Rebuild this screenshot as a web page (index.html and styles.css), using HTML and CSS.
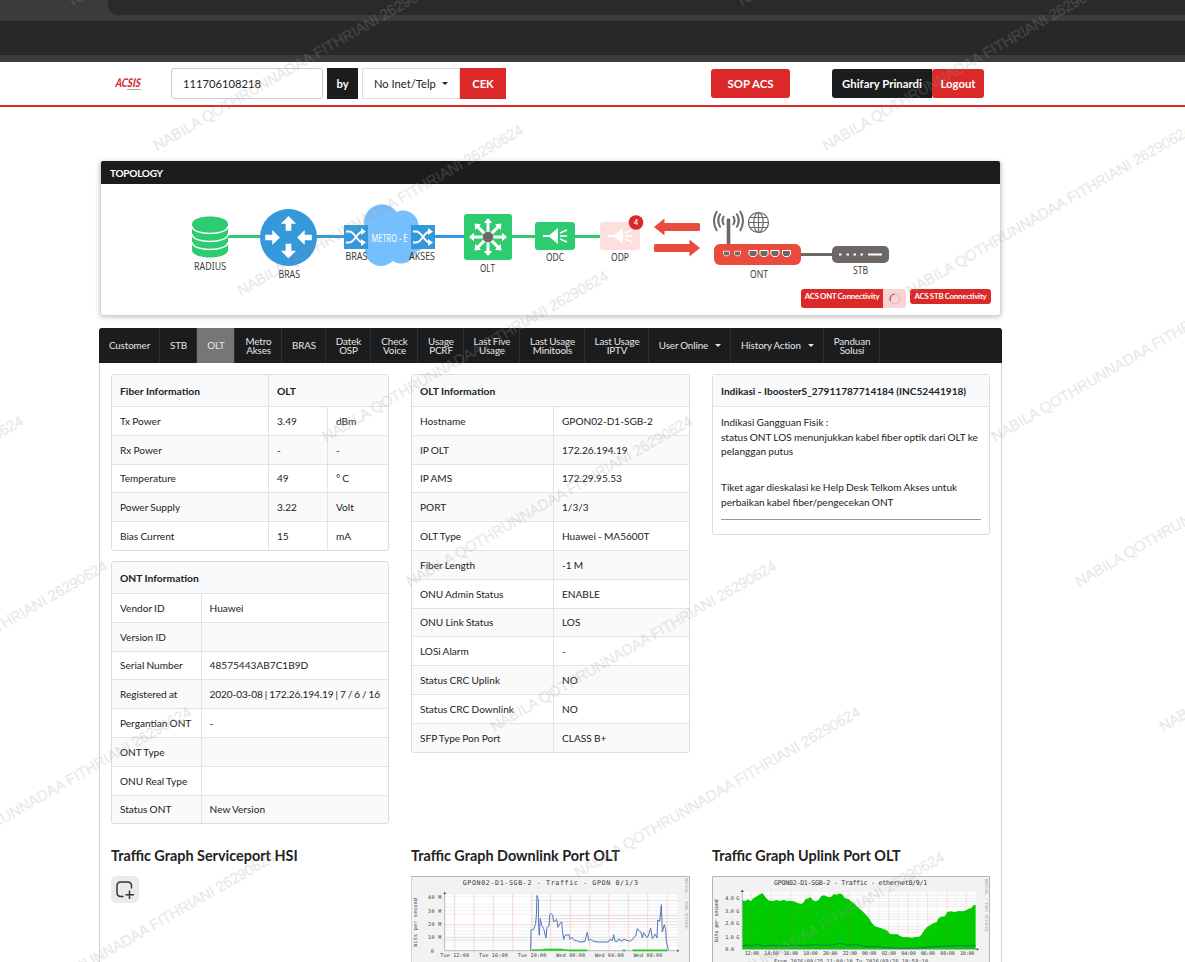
FILE: index.html
```html
<!DOCTYPE html>
<html lang="id">
<head>
    <meta charset="UTF-8">
    <meta name="viewport" content="width=device-width, initial-scale=1.0">
    <title>ACSIS</title>
    <link rel="stylesheet" href="styles.css">
</head>
<body>
    <div class="browser-bar"><div class="address"></div></div>
    <div class="bookmark-bar"></div>

    <header class="topbar">
        <svg class="logo" width="30" height="16" viewBox="0 0 30 16">
            <text x="1.500" y="12" textLength="25" lengthAdjust="spacingAndGlyphs" transform="skewX(-6)">ACSIS</text>
            <path d="M12 14.500h14" stroke="#b9a5a5" stroke-width="1"/>
        </svg>
        <input class="search" type="text" value="111706108218">
        <div class="by">by</div>
        <div class="select">No Inet/Telp <i class="caret"></i></div>
        <button class="cek">CEK</button>
        <button class="btn sop">SOP ACS</button>
        <button class="btn user">Ghifary Prinardi</button>
        <button class="btn logout">Logout</button>
    </header>

    <section class="topology">
        <h2>TOPOLOGY</h2>
        <svg class="diagram" width="898" height="104" viewBox="101 185 898 104">
            <defs>
                <path id="arrow" d="M-3-6.5V-14h-5L0-22l8 8H3v7.5z" transform="scale(.95)"/>
                <g id="shuffle" fill="none" stroke="#fff" stroke-width="2">
                    <path d="M-10-5.500h3.500Q-4-5.500 0 0T6.500 5.500M-10 5.500h3.500Q-4 5.500 0 0T6.500-5.500"/>
                    <path fill="#fff" stroke="none" d="M5-9l5 3.500-5 3.500zM5 2l5 3.500-5 3.500z"/>
                </g>
                <path id="spoke" d="M-1.500-4v-10h-2.700L0-19l4.200 5H1.500v10z"/>
                <g id="horn">
                    <path d="M-12-1h6.500L3-8V8L-5.500 1H-12z"/>
                    <path d="M5-3l7-3M5 0h7M5 3l7 3" stroke="#fff" stroke-width="1.500"/>
                </g>
                <path id="port" d="M-4-3h8v4l-2 2h-4l-2-2z"/>
            </defs>

            <!-- links -->
            <path d="M227 236.500h35M511 236.500h90" stroke="#2ecc71" stroke-width="3"/>
            <path d="M316 236.500h29M434 236.500h31" stroke="#3498db" stroke-width="3"/>
            <path d="M800 254.500h33" stroke="#6d6766" stroke-width="3"/>

            <!-- radius -->
            <path d="M192 224v26c0 10 36 10 36 0v-26c0-10-36-10-36 0z" fill="#2ecc71"/>
            <path d="M192 226c0 10 36 10 36 0M192 234c0 10 36 10 36 0M192 242c0 10 36 10 36 0" fill="none" stroke="#fff" stroke-width="1.500"/>
            <text x="194" y="270" textLength="32" lengthAdjust="spacingAndGlyphs">RADIUS</text>

            <!-- bras -->
            <circle cx="288.500" cy="237.500" r="28.500" fill="#3498db"/>
            <g fill="#fff">
                <use href="#arrow" x="288.500" y="237"/>
                <use href="#arrow" transform="translate(288.500 237.500) rotate(180)"/>
                <use href="#arrow" transform="translate(266 237.500) rotate(90) translate(0 7)"/>
                <use href="#arrow" transform="translate(311 237.500) rotate(-90) translate(0 7)"/>
            </g>
            <text x="278.500" y="278" textLength="21.500" lengthAdjust="spacingAndGlyphs">BRAS</text>

            <!-- metro -->
            <g fill="#74bffc">
                <circle cx="382" cy="222.500" r="18"/>
                <circle cx="403" cy="226" r="15.500"/>
                <circle cx="381" cy="250" r="16"/>
                <circle cx="401" cy="249" r="14.500"/>
                <circle cx="373" cy="236" r="13"/>
                <circle cx="413" cy="239" r="13"/>
                <path d="M372 222h36v32h-36z"/>
            </g>
            <path d="M344 225h24v24h-24zM411 225h24v24h-24z" fill="#3498db"/>
            <use href="#shuffle" x="356" y="237"/>
            <use href="#shuffle" x="423" y="237"/>
            <text class="metro" x="371.500" y="241.500" textLength="36" lengthAdjust="spacingAndGlyphs">METRO - E</text>
            <text x="345.500" y="260" textLength="22" lengthAdjust="spacingAndGlyphs">BRAS</text>
            <text x="409" y="260" textLength="26" lengthAdjust="spacingAndGlyphs">AKSES</text>

            <!-- olt -->
            <rect x="464" y="214" width="48" height="46" rx="3" fill="#2ecc71"/>
            <g transform="translate(488 237)" fill="#fff">
                <use href="#spoke"/>
                <use href="#spoke" transform="rotate(45)"/>
                <use href="#spoke" transform="rotate(90)"/>
                <use href="#spoke" transform="rotate(135)"/>
                <use href="#spoke" transform="rotate(180)"/>
                <use href="#spoke" transform="rotate(225)"/>
                <use href="#spoke" transform="rotate(270)"/>
                <use href="#spoke" transform="rotate(315)"/>
                <circle r="5.300" fill="#6d6766"/>
            </g>
            <text x="480" y="272" textLength="15" lengthAdjust="spacingAndGlyphs">OLT</text>

            <!-- odc / odp -->
            <rect x="535" y="222" width="40" height="28" rx="3" fill="#2ecc71"/>
            <use href="#horn" x="555" y="236" fill="#fff"/>
            <text x="546" y="261" textLength="18" lengthAdjust="spacingAndGlyphs">ODC</text>
            <rect x="600" y="222" width="40" height="28" rx="3" fill="#fde0de"/>
            <use href="#horn" x="620" y="236" fill="#fff"/>
            <text x="611" y="261" textLength="18" lengthAdjust="spacingAndGlyphs">ODP</text>
            <circle cx="636" cy="222.500" r="7.300" fill="#db2828"/>
            <text class="badge" x="636" y="225">4</text>

            <path d="M654 227l10.500-8.500v4.500h34q1.500 0 1.500 1.500v5q0 1.500-1.500 1.500h-34v4.500z" fill="#e94b3c"/>
            <path d="M700 248l-10.500-8.500v4.500h-34q-1.500 0-1.500 1.500v5q0 1.500 1.500 1.500h34v4.500z" fill="#e94b3c"/>

            <!-- ont -->
            <g fill="none" stroke="#6d6766" stroke-width="2">
                <path d="M728.500 220v25" stroke-width="3.600" stroke-linecap="round"/>
                <path d="M724 216q-3 4.500 0 9M720.500 213.500q-4.500 7 0 14M717 211q-6 10 0 20M733 216q3 4.500 0 9M736.500 213.500q4.500 7 0 14M740 211q6 10 0 20"/>
                <g stroke-width="1.200">
                    <circle cx="758.500" cy="222.500" r="10"/>
                    <ellipse cx="758.500" cy="222.500" rx="4.700" ry="10"/>
                    <path d="M758.500 212.500v20M748.500 222.500h20M750 217.500h17M750 227.500h17"/>
                </g>
            </g>
            <rect x="714" y="244" width="87" height="21" rx="6" fill="#e94b3c"/>
            <g fill="#6d6766" stroke="#fff" stroke-width="1">
                <use href="#port" transform="translate(726.500 253.500) scale(.75)"/>
                <use href="#port" transform="translate(737.500 253.500) scale(.75)"/>
                <use href="#port" x="753" y="253.500"/>
                <use href="#port" x="764" y="253.500"/>
                <use href="#port" x="775" y="253.500"/>
                <use href="#port" x="786.500" y="253.500"/>
            </g>
            <text x="750" y="278" textLength="18" lengthAdjust="spacingAndGlyphs">ONT</text>

            <!-- stb -->
            <rect x="832" y="246" width="57" height="17" rx="5" fill="#6d6766"/>
            <path d="M839 254.500h2.500M846.500 254.500h2.500M853.500 254.500h2.500M860.500 254.500h2.500M868 254.500h14" stroke="#fff" stroke-width="2.200"/>
            <text x="853" y="274" textLength="15" lengthAdjust="spacingAndGlyphs">STB</text>
        </svg>
        <div class="acs">
            <span class="acs-ont">ACS ONT Connectivity</span>
            <span class="acs-load"><svg width="12" height="12" viewBox="0 0 12 12"><circle cx="6" cy="6" r="5" fill="none" stroke="#e3bcbc" stroke-width="1.200"/><path d="M1.500 8A5 5 0 0 1 6 1" fill="none" stroke="#8a6a6a" stroke-width="1.200"/></svg></span>
            <span class="acs-stb">ACS STB Connectivity</span>
        </div>
    </section>

    <main class="panel">
        <nav class="tabs">
            <a>Customer</a>
            <a>STB</a>
            <a class="active">OLT</a>
            <a>Metro<br>Akses</a>
            <a>BRAS</a>
            <a>Datek<br>OSP</a>
            <a>Check<br>Voice</a>
            <a>Usage<br>PCRF</a>
            <a>Last Five<br>Usage</a>
            <a>Last Usage<br>Minitools</a>
            <a>Last Usage<br>IPTV</a>
            <a>User Online <i class="caret"></i></a>
            <a>History Action <i class="caret"></i></a>
            <a>Panduan<br>Solusi</a>
        </nav>

        <div class="columns">
            <div class="col">
                <table class="fiber">
                    <tr><th>Fiber Information</th><th colspan="2">OLT</th></tr>
                    <tr><td>Tx Power</td><td>3.49</td><td>dBm</td></tr>
                    <tr><td>Rx Power</td><td>-</td><td>-</td></tr>
                    <tr><td>Temperature</td><td>49</td><td>° C</td></tr>
                    <tr><td>Power Supply</td><td>3.22</td><td>Volt</td></tr>
                    <tr><td>Bias Current</td><td>15</td><td>mA</td></tr>
                </table>
                <table class="ont">
                    <tr><th colspan="2">ONT Information</th></tr>
                    <tr><td>Vendor ID</td><td>Huawei</td></tr>
                    <tr><td>Version ID</td><td></td></tr>
                    <tr><td>Serial Number</td><td>48575443AB7C1B9D</td></tr>
                    <tr><td>Registered at</td><td class="registered">2020-03-08 | 172.26.194.19 | 7 / 6 / 16</td></tr>
                    <tr><td>Pergantian ONT</td><td>-</td></tr>
                    <tr><td>ONT Type</td><td></td></tr>
                    <tr><td>ONU Real Type</td><td></td></tr>
                    <tr><td>Status ONT</td><td>New Version</td></tr>
                </table>
            </div>
            <div class="col">
                <table class="olt">
                    <tr><th colspan="2">OLT Information</th></tr>
                    <tr><td>Hostname</td><td>GPON02-D1-SGB-2</td></tr>
                    <tr><td>IP OLT</td><td>172.26.194.19</td></tr>
                    <tr><td>IP AMS</td><td>172.29.95.53</td></tr>
                    <tr><td>PORT</td><td>1/3/3</td></tr>
                    <tr><td>OLT Type</td><td>Huawei - MA5600T</td></tr>
                    <tr><td>Fiber Length</td><td>-1 M</td></tr>
                    <tr><td>ONU Admin Status</td><td>ENABLE</td></tr>
                    <tr><td>ONU Link Status</td><td>LOS</td></tr>
                    <tr><td>LOSi Alarm</td><td>-</td></tr>
                    <tr><td>Status CRC Uplink</td><td>NO</td></tr>
                    <tr><td>Status CRC Downlink</td><td>NO</td></tr>
                    <tr><td>SFP Type Pon Port</td><td>CLASS B+</td></tr>
                </table>
            </div>
            <div class="col">
                <div class="indikasi">
                    <h3>Indikasi - IboosterS_27911787714184 (INC52441918)</h3>
                    <div class="indikasi-body">
                        <p>Indikasi Gangguan Fisik :<br>status ONT LOS menunjukkan kabel fiber optik dari OLT ke pelanggan putus</p>
                        <p>Tiket agar dieskalasi ke Help Desk Telkom Akses untuk perbaikan kabel fiber/pengecekan ONT</p>
                        <hr>
                    </div>
                </div>
            </div>
        </div>

        <div class="columns graphs">
            <div class="col">
                <h4>Traffic Graph Serviceport HSI</h4>
                <button class="add">
                    <svg width="20" height="20" viewBox="0 0 20 20" fill="none" stroke="#333" stroke-width="1.500">
                        <path d="M8.500 16.500H6q-4 0-4-4V6q0-4 4-4h6.500q4 0 4 4v2.500"/>
                        <path d="M14.500 10.500v8.500M10.500 14.700h8.500"/>
                    </svg>
                </button>
            </div>
            <div class="col">
                <h4>Traffic Graph Downlink Port OLT</h4>
                <svg class="graph" width="279" height="96" viewBox="33 108 837 288">
                    <rect x="33" y="108" width="837" height="288" fill="#f2f2f2"/>
                    <rect x="134" y="162" width="698" height="170" fill="#fff"/>
                    <path d="M134 162h698M134 170h698M134 192h698M134 202h698M134 212h698M134 222h698M134 262h698M134 272h698M134 282h698M134 308h698M134 318h698" stroke="#ececec" stroke-width="2"/>
                    <path d="M392 181h440M392 227h440M392 236h440M392 245h440M134 292h698M134 300h698" stroke="#cfcfcf" stroke-width="2"/>
                    <path d="M134 254h698M164 162v170M222 162v170M280 162v170M338 162v170M395 162v170M452 162v170M511 162v170M569 162v170M627 162v170M685 162v170M743 162v170M801 162v170" stroke="#f6c6c6" stroke-width="2"/>
                    <path d="M134 156v176h700" fill="none" stroke="#999" stroke-width="2"/>
                    <polyline points="392,332 393,270 401,268 407,250 409,228 411,166 415,180 416,262 418,286 421,236 425,256 431,266 438,294 441,262 447,258 449,224 453,220 458,226 461,246 467,240 470,238 474,262 480,250 485,246 487,268 491,298 495,286 507,284 510,298 516,292 524,302 530,302 540,306 555,304 562,276 566,302 572,298 580,304 594,306 624,306 630,298 637,302 641,284 645,304 653,304 657,296 663,304 672,298 690,304 698,298 704,290 707,288 712,266 718,274 723,276 727,294 731,278 740,292 744,290 752,264 757,296 761,290 766,282 771,294 773,240 779,244 784,194 787,276 793,254 797,268 799,304 805,330" fill="none" stroke="#5574bd" stroke-width="3"/>
                    <path d="M396 330h110M506 331h56M668 331h8M698 331h104" stroke="#2c2" stroke-width="5"/>
                    <path d="M430 328h60" stroke="#2c2" stroke-width="4"/>
                    <path d="M130 162l4-7 4 7zM832 328l6 4-6 4z" fill="#a22"/>
                    <g class="graph-text">
                        <text class="graph-title" x="188" y="136" textLength="526">GPON02-D1-SGB-2 - Traffic - GPON 0/1/3</text>
                        <text x="84" y="177" textLength="40">40 M</text>
                        <text x="84" y="218" textLength="40">30 M</text>
                        <text x="84" y="258" textLength="40">20 M</text>
                        <text x="84" y="298" textLength="40">10 M</text>
                        <text x="92" y="338">0</text>
                        <text x="121" y="352" textLength="86">Tue 12:00</text>
                        <text x="237" y="352" textLength="86">Tue 16:00</text>
                        <text x="353" y="352" textLength="86">Tue 20:00</text>
                        <text x="469" y="352" textLength="86">Wed 00:00</text>
                        <text x="585" y="352" textLength="86">Wed 04:00</text>
                        <text x="701" y="352" textLength="86">Wed 08:00</text>
                        <text transform="translate(52 320) rotate(-90)" textLength="146">bits per second</text>
                        <text class="rrd" transform="translate(855 114) rotate(90)" textLength="152">RRDTOOL / TOBI OETIKER</text>
                    </g>
                    <path d="M33 396V109.500h835.500V396" fill="none" stroke="#b5b5b5" stroke-width="3"/>
                </svg>
            </div>
            <div class="col">
                <h4>Traffic Graph Uplink Port OLT</h4>
                <svg class="graph" width="279" height="96" viewBox="36 108 837 288">
                    <rect x="36" y="108" width="834" height="288" fill="#f2f2f2"/>
                    <rect x="127" y="157" width="702" height="171" fill="#fff"/>
                    <path d="M127 165h702M127 184h702M127 192h702M127 200h702M127 222h702M127 230h702M127 238h702M127 260h702M127 268h702M127 276h702" stroke="#e2e2e2" stroke-width="2"/>
                    <polygon points="127,328 127,180 135,183 145,178 152,184 160,175 172,168 180,163 188,160 194,168 200,176 208,182 220,183 230,180 240,183 252,179 260,184 270,182 280,184 292,188 302,192 310,188 316,178 328,174 332,171 338,180 346,184 356,180 364,168 372,166 382,170 392,172 402,162 410,164 420,160 428,164 434,174 446,178 456,186 464,192 474,202 486,212 498,224 508,236 516,250 524,258 534,262 542,264 552,268 562,272 570,282 580,283 592,282 600,288 610,292 622,291 636,293 646,291 658,290 664,284 672,272 680,262 690,256 700,250 710,246 716,234 724,230 734,229 742,216 752,214 764,216 776,213 788,214 798,211 806,206 814,204 820,196 827,194 827,328" fill="#0c0"/>
                    <path d="M154 157v171M213 157v171M272 157v171M330 157v171M390 157v171M448 157v171M507 157v171M566 157v171M624 157v171M683 157v171M741 157v171M799 157v171" stroke="#e33" stroke-width="2" opacity=".2"/>
                    <path d="M184 157v171M243 157v171M301 157v171M360 157v171M419 157v171M477 157v171M536 157v171M595 157v171M653 157v171M712 157v171M770 157v171M127 176h702M127 214h702M127 252h702M127 290h702" stroke="#444" stroke-width="2" opacity=".08"/>
                    <polyline points="127,318 139,315 153,317 173,313 187,317 227,316 257,318 287,315 307,317 347,314 367,316 397,315 420,310 440,315 470,314 500,320 530,320 560,323 600,325 650,325 680,322 720,319 780,316 800,318 827,317" fill="none" stroke="#0a7a5a" stroke-width="3"/>
                    <path d="M127 152v176h704" fill="none" stroke="#999" stroke-width="2"/>
                    <path d="M122 156l5-7 5 7zM830 324l7 4-7 4z" fill="#a22"/>
                    <g class="graph-text">
                        <text class="graph-title" x="222" y="134" textLength="460">GPON02-D1-SGB-2 - Traffic - ethernet0/9/1</text>
                        <text x="76" y="180" textLength="42">4.0 G</text>
                        <text x="76" y="218" textLength="42">3.0 G</text>
                        <text x="76" y="256" textLength="42">2.0 G</text>
                        <text x="76" y="296" textLength="42">1.0 G</text>
                        <text x="76" y="333" textLength="26">0.0</text>
                        <text x="134" y="344" textLength="43">12:00</text>
                        <text x="193" y="344" textLength="43">14:00</text>
                        <text x="251" y="344" textLength="43">16:00</text>
                        <text x="310" y="344" textLength="43">18:00</text>
                        <text x="369" y="344" textLength="43">20:00</text>
                        <text x="428" y="344" textLength="43">22:00</text>
                        <text x="486" y="344" textLength="43">00:00</text>
                        <text x="545" y="344" textLength="43">02:00</text>
                        <text x="604" y="344" textLength="43">04:00</text>
                        <text x="662" y="344" textLength="43">06:00</text>
                        <text x="721" y="344" textLength="43">08:00</text>
                        <text x="780" y="344" textLength="43">10:00</text>
                        <text x="222" y="369" textLength="462">From 2026/09/25 11:00:10 To 2026/09/26 10:58:10</text>
                        <text transform="translate(54 306) rotate(-90)" textLength="128">bits per second</text>
                        <text class="rrd" transform="translate(855 116) rotate(90)" textLength="158">RRDTOOL / TOBI OETIKER</text>
                    </g>
                    <path d="M37.500 396V109.500h831V396" fill="none" stroke="#b5b5b5" stroke-width="3"/>
                </svg>
            </div>
        </div>
    </main>

    <svg class="watermark" width="1185" height="962" viewBox="0 0 1185 962">
        <defs>
            <text id="wm" transform="rotate(-29.900)" textLength="327">NABILA QOTHRUNNADAA FITHRIANI 26290624</text>
        </defs>
        <use href="#wm" x="73" y="6"/>
        <use href="#wm" x="157" y="151"/>
        <use href="#wm" x="241" y="296"/>
        <use href="#wm" x="326" y="442"/>
        <use href="#wm" x="410" y="587"/>
        <use href="#wm" x="494" y="732"/>
        <use href="#wm" x="578" y="878"/>
        <use href="#wm" x="662" y="1023"/>
        <use href="#wm" x="742" y="6"/>
        <use href="#wm" x="826" y="151"/>
        <use href="#wm" x="910" y="296"/>
        <use href="#wm" x="995" y="442"/>
        <use href="#wm" x="1079" y="587"/>
        <use href="#wm" x="1163" y="732"/>
        <use href="#wm" x="-259" y="587"/>
        <use href="#wm" x="-175" y="732"/>
        <use href="#wm" x="-91" y="878"/>
        <use href="#wm" x="-7" y="1023"/>
    </svg>
</body>
</html>
```

FILE: styles.css
```css
* { box-sizing: border-box; }
body { margin: 0; height: 962px; overflow: hidden; position: relative; background: #fff; font-family: Lato, "Liberation Sans", sans-serif; font-size: 10.1px; color: #222; }
button { font-family: inherit; border: none; padding: 0; }

.browser-bar { height: 21px; padding-left: 108px; background: #3b3b3b; }
.address { height: 15px; background: #2a2a2a; border-bottom-left-radius: 10px; }
.bookmark-bar { height: 41px; background: #282828; border-bottom: 7px solid #3b3b3b; }

.topbar { display: flex; align-items: center; height: 45px; padding: 0 0 1px 115px; border-bottom: 2px solid #db2828; }
.logo { margin-right: 26px; }
.logo text { font: italic 900 12px Lato, sans-serif; fill: #cf3338; }
.search { width: 152px; height: 31px; padding: 0 11px; border: 1px solid #ccc; border-radius: 3px; font-family: inherit; font-size: 11.2px; color: #222; }
.by { width: 31px; height: 31px; margin: 0 4px; background: #1b1c1d; color: #fff; font-weight: 700; font-size: 11.2px; line-height: 31px; text-align: center; }
.select { display: flex; align-items: center; justify-content: space-between; width: 98px; height: 31px; padding: 0 11px; border: 1px solid #ddd; font-size: 11.2px; }
.caret { display: inline-block; border: 3px solid transparent; border-top-color: currentColor; border-bottom: 0; }
.cek { width: 46px; height: 31px; background: #db2828; color: #fff; font-size: 11.2px; font-weight: 700; }
.btn { height: 29px; border-radius: 3px; background: #db2828; color: #fff; font-size: 11.4px; font-weight: 700; white-space: nowrap; }
.sop { width: 79px; margin: 0 42px 0 205px; }
.user { width: 100px; background: #1b1c1d; border-radius: 3px 0 0 3px; }
.logout { width: 52px; }

.topology { width: 901px; height: 155px; margin: 54px 0 0 100px; border: 1px solid #d4d4d5; border-top: 0; border-radius: 3px; box-shadow: 0 1px 5px rgba(0,0,0,.25); }
.topology h2 { height: 23px; margin: 0 0 1px; padding-left: 9px; background: #1b1c1d; border-radius: 2px 2px 0 0; color: #fff; font-size: 10.1px; line-height: 25px; letter-spacing: -.3px; }
.diagram { display: block; }
.diagram text { font: 9.9px "Noto Sans", sans-serif; fill: #3c3c3c; }
.diagram .metro { font-size: 9.9px; fill: #fff; }
.diagram .badge { font: 700 7px Lato, sans-serif; fill: #fff; text-anchor: middle; }
.acs { display: flex; align-items: flex-start; justify-content: flex-end; padding-right: 9px; color: #fff; font-size: 7.8px; font-weight: 700; line-height: 15px; text-align: center; letter-spacing: -.2px; word-spacing: -.4px; white-space: nowrap; }
.acs-ont { width: 82px; height: 19px; background: #db2828; border-radius: 3px 0 0 3px; }
.acs-load { display: flex; align-items: center; justify-content: center; width: 23px; height: 19px; margin-right: 4px; background: #f8d4d4; border-radius: 0 3px 3px 0; }
.acs-stb { width: 81px; height: 15px; background: #db2828; border-radius: 3px; }

.panel { width: 903px; height: 640px; margin: 12px 0 0 99px; border: 1px solid #d4d4d5; border-top: 0; border-radius: 3px 3px 0 0; }
.tabs { display: grid; grid-template-columns: 61px 37px 38px 47px 44px 45px 47px 46px 56px 65px 64px 82px 93px 56px; height: 35px; margin: 0 -1px; background: #1b1c1d; border-radius: 3px 3px 0 0; }
.tabs a { display: flex; align-items: center; justify-content: center; border-right: 1px solid #2e2f30; padding-left: 1px; color: #e6e6e6; font-size: 9.8px; line-height: 9px; letter-spacing: -.1px; word-spacing: -.4px; text-align: center; white-space: nowrap; }
.tabs .active { background: #767676; }
.tabs .caret { margin-left: 7px; }

.columns { display: grid; grid-template-columns: 278px 279px 278px; column-gap: 22px; padding: 11px 11px 0; }
table { width: 100%; margin-bottom: 10px; border: 1px solid #dcdddd; border-radius: 3px; border-spacing: 0; overflow: hidden; }
th, td { height: 28.8px; padding: 0 8px; text-align: left; white-space: nowrap; }
th { height: 31px; background: #f9fafb; font-size: 10.3px; font-weight: 700; padding-top: 1px; }
td { border-top: 1px solid #e2e3e3; word-spacing: -.4px; }
td + td, th + th { border-left: 1px solid #e2e3e3; }
tr:nth-child(odd) td { background: #fafafa; }
.fiber th:first-child { width: 156px; }
.fiber td:nth-child(2) { width: 59px; }
.ont td:first-child { width: 89px; }
.ont .registered { letter-spacing: -.12px; }
.olt td:first-child { width: 141px; }

.indikasi { height: 161px; border: 1px solid #dcdddd; border-radius: 3px; }
.indikasi h3 { height: 32px; margin: 0; padding-left: 8px; background: #f9fafb; border-bottom: 1px solid #e2e3e3; font-size: 10.1px; line-height: 32px; white-space: nowrap; }
.indikasi-body { padding: 8px 8px 0; line-height: 14.6px; word-spacing: -.4px; }
.indikasi p { margin: 0 0 21.5px; }
.indikasi hr { margin: -12px 0 0; border: 0; border-top: 1px solid #999; }

.graphs { padding-top: 13px; }
h4 { margin: 0 0 11px; font-size: 14.4px; line-height: 18px; white-space: nowrap; }
.add { display: flex; align-items: center; justify-content: center; width: 28px; height: 27px; background: #ebebeb; border-radius: 5px; }
.graph { display: block; }
.graph-text { font-family: "DejaVu Sans Mono", monospace; font-size: 15px; fill: #333; }
.graph-title { font-size: 20px; }
.rrd { font-size: 12px; fill: #aaa; }

.watermark { position: absolute; top: 0; left: 0; pointer-events: none; }
.watermark text { font: 15px "Liberation Sans", Arial, sans-serif; fill: rgba(160,160,160,.17); stroke: rgba(160,160,160,.14); stroke-width: .8; }
```
